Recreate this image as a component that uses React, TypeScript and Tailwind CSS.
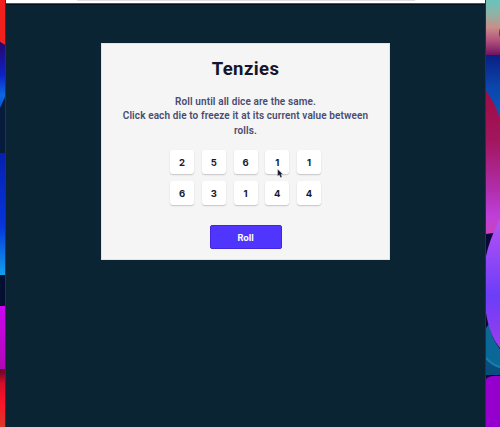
const dice = [2, 5, 6, 1, 1, 6, 3, 1, 4, 4];

function LeftWallpaper() {
  return (
    <svg className="block h-[427px] w-[5px] shrink-0" viewBox="0 0 5 427" preserveAspectRatio="none">
      <defs>
        <linearGradient id="l1" x1="0" y1="0" x2="0" y2="1">
          <stop offset="0" stopColor="#26056b" />
          <stop offset=".5" stopColor="#0d22c4" />
          <stop offset=".8" stopColor="#0c66e4" />
          <stop offset="1" stopColor="#0b55d6" />
        </linearGradient>
        <linearGradient id="l2" x1="0" y1="0" x2="0" y2="1">
          <stop offset="0" stopColor="#061fae" />
          <stop offset=".6" stopColor="#0535dc" />
          <stop offset="1" stopColor="#12a0ec" />
        </linearGradient>
        <linearGradient id="l3" x1="0" y1="0" x2="0" y2="1">
          <stop offset="0" stopColor="#cb05f2" />
          <stop offset="1" stopColor="#b008b4" />
        </linearGradient>
        <linearGradient id="l4" x1="0" y1="0" x2="0" y2="1">
          <stop offset="0" stopColor="#5b0626" />
          <stop offset=".25" stopColor="#d80d2c" />
          <stop offset=".6" stopColor="#fb1526" />
          <stop offset="1" stopColor="#d93a2c" />
        </linearGradient>
      </defs>
      <rect width="5" height="427" fill="#071b3c" />
      <path d="M0 0H5V45L0 42Z" fill="#f1201c" />
      <path d="M0 42L5 45V97L0 108Z" fill="url(#l1)" />
      <rect y="153" width="5" height="122" fill="url(#l2)" />
      <rect y="275" width="5" height="31" fill="#03102f" />
      <rect y="306" width="5" height="63" fill="url(#l3)" />
      <rect y="369" width="5" height="58" fill="url(#l4)" />
    </svg>
  );
}

function RightWallpaper() {
  return (
    <svg className="block h-[427px] w-[14px] shrink-0" viewBox="0 0 14 427">
      <defs>
        <linearGradient id="r1" x1="0" y1="0" x2="0" y2="1">
          <stop offset="0" stopColor="#68c4bc" />
          <stop offset=".25" stopColor="#8fb3a5" />
          <stop offset=".5" stopColor="#c98e87" />
          <stop offset=".75" stopColor="#b04f7c" />
          <stop offset="1" stopColor="#6d145f" />
        </linearGradient>
        <linearGradient id="r2" x1="0" y1="0" x2="0" y2="1">
          <stop offset="0" stopColor="#0a1f83" />
          <stop offset=".5" stopColor="#0b46ad" />
          <stop offset="1" stopColor="#0759bf" />
        </linearGradient>
        <linearGradient id="r3" x1="0" y1="0" x2="0" y2="1">
          <stop offset="0" stopColor="#9d0c43" />
          <stop offset=".35" stopColor="#a3165f" />
          <stop offset=".7" stopColor="#b12fae" />
          <stop offset=".87" stopColor="#bf3ed9" />
          <stop offset="1" stopColor="#cb42bd" />
        </linearGradient>
        <linearGradient id="r4" x1="0" y1="0" x2="0" y2="1">
          <stop offset="0" stopColor="#b653f4" />
          <stop offset=".6" stopColor="#6c3df8" />
          <stop offset="1" stopColor="#9a3dee" />
        </linearGradient>
      </defs>
      <rect width="14" height="427" fill="#0c0738" />
      <rect width="14" height="55" fill="url(#r1)" />
      <ellipse cx="15" cy="33" rx="2" ry="5" fill="#922457" />
      <rect y="55" width="14" height="65" fill="url(#r2)" />
      <path d="M0 91Q8 101 14 118V232L0 234Z" fill="url(#r3)" />
      <path d="M0 328L3 324Q6 340 14 349V375H0Z" fill="#0b6798" />
      <path d="M0 358Q6 366 14 368V375H0Z" fill="#084d7d" />
      <path d="M0 358Q6 365 14 367" fill="none" stroke="#147eae" strokeWidth="2" />
      <path d="M14 218Q3 241 0 256V313Q4 337 14 348Z" fill="url(#r4)" />
      <path d="M0 379Q4 375 14 376V427H0Z" fill="#9600cf" />
    </svg>
  );
}

export default function App() {
  return (
    <div className="relative flex h-[427px] w-[500px] overflow-hidden bg-[#0b2434] font-['Roboto','Liberation_Sans',sans-serif]">
      <LeftWallpaper />
      <div className="flex w-[481px] flex-col border-x border-[#213449]">
        <div className="h-[3px] shrink-0 bg-white">
          <div className="ml-[71px] h-px w-[338px] rounded-full bg-[#dedfe1]" />
        </div>
        <div className="h-px shrink-0 bg-[#4b545d]" />
        <div className="h-px shrink-0 bg-[#04121f]" />
        <main className="mt-[38px] ml-[95px] flex h-[217px] w-[289px] flex-col items-center border border-[#dfe4e8] bg-[#f5f5f5]">
          <h1 className="mt-[13px] text-[18.5px] leading-6 font-bold tracking-[0.4px] text-[#14162d]">Tenzies</h1>
          <p className="mt-[14px] text-center text-[10px] leading-[14.3px] font-semibold tracking-[0.11px] whitespace-nowrap text-[#4a4c70]">
            Roll until all dice are the same.
            <br />
            Click each die to freeze it at its current value between
            <br />
            rolls.
          </p>
          <div className="mt-[12px] grid grid-cols-5 gap-x-[7.75px] gap-y-[7.5px]">
            {dice.map((value, i) => (
              <div
                key={i}
                className="flex size-6 items-center justify-center rounded-[3px] bg-white pt-px font-['Inter','Roboto',sans-serif] text-[9.5px] leading-none font-bold text-[#171a31] shadow-[0_1px_1.5px_rgba(0,0,0,0.2)]"
              >
                {value}
              </div>
            ))}
          </div>
          <button className="mt-[20px] h-6 w-[72px] rounded-[2px] border border-[#4426dc] bg-[#5035ff] pt-px font-['Inter','Roboto',sans-serif] text-[9px] leading-none font-bold text-white">
            Roll
          </button>
        </main>
      </div>
      <RightWallpaper />
      <svg className="absolute top-[169px] left-[277px] h-[9px] w-[6px]" viewBox="0 0 6 9">
        <path d="M.7.3V7L2.3 5.7L3.5 8.5L4.9 7.9L3.8 5.2H5.8Z" fill="#161a2b" stroke="#c7c9ce" strokeWidth=".25" />
      </svg>
    </div>
  );
}
